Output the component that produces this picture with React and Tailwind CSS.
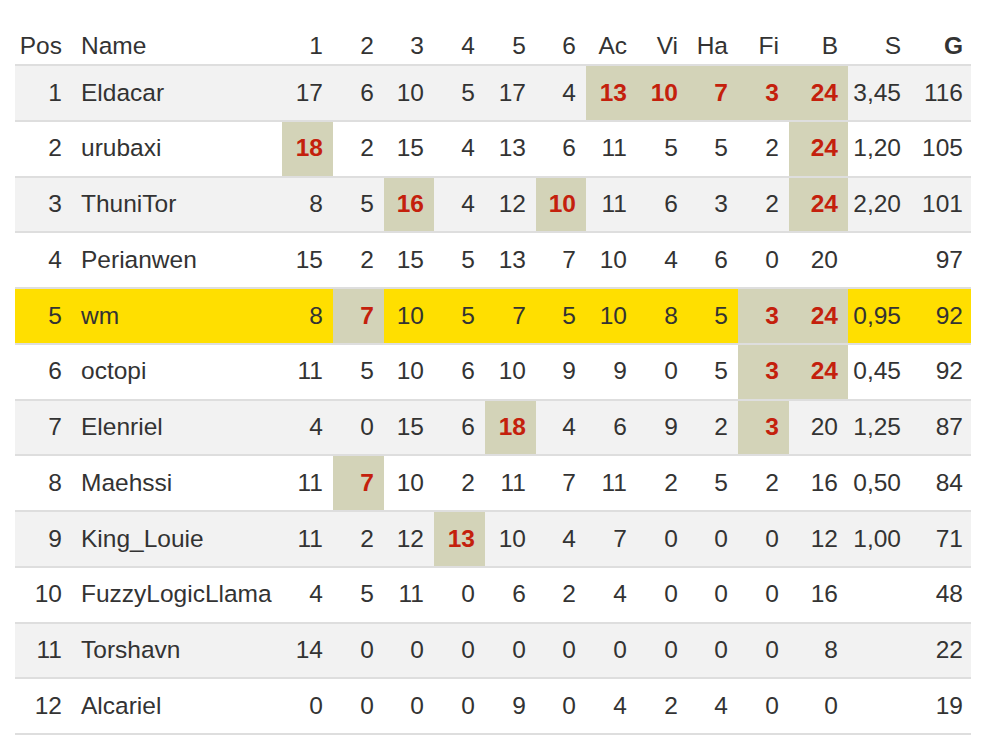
const columns = [
  { key: "pos", label: "Pos", width: "w-[56px]", align: "text-right pr-[9px]" },
  { key: "name", label: "Name", width: "w-[211px]", align: "text-left pl-[10px]" },
  { key: "c1", label: "1", width: "w-[51px]", align: "text-right pr-[10px]" },
  { key: "c2", label: "2", width: "w-[51px]", align: "text-right pr-[10px]" },
  { key: "c3", label: "3", width: "w-[50px]", align: "text-right pr-[10px]" },
  { key: "c4", label: "4", width: "w-[51px]", align: "text-right pr-[10px]" },
  { key: "c5", label: "5", width: "w-[51px]", align: "text-right pr-[10px]" },
  { key: "c6", label: "6", width: "w-[50px]", align: "text-right pr-[10px]" },
  { key: "ac", label: "Ac", width: "w-[51px]", align: "text-right pr-[10px]" },
  { key: "vi", label: "Vi", width: "w-[51px]", align: "text-right pr-[10px]" },
  { key: "ha", label: "Ha", width: "w-[50px]", align: "text-right pr-[10px]" },
  { key: "fi", label: "Fi", width: "w-[51px]", align: "text-right pr-[10px]" },
  { key: "b", label: "B", width: "w-[59px]", align: "text-right pr-[10px]" },
  { key: "s", label: "S", width: "w-[62px]", align: "text-right pr-[9px]" },
  { key: "g", label: "G", width: "w-[61px]", align: "text-right pr-[8px]" },
];

// "*" marks a best score for that column
const rows = [
  ["1", "Eldacar", "17", "6", "10", "5", "17", "4", "*13", "*10", "*7", "*3", "*24", "3,45", "116"],
  ["2", "urubaxi", "*18", "2", "15", "4", "13", "6", "11", "5", "5", "2", "*24", "1,20", "105"],
  ["3", "ThuniTor", "8", "5", "*16", "4", "12", "*10", "11", "6", "3", "2", "*24", "2,20", "101"],
  ["4", "Perianwen", "15", "2", "15", "5", "13", "7", "10", "4", "6", "0", "20", "", "97"],
  ["5", "wm", "8", "*7", "10", "5", "7", "5", "10", "8", "5", "*3", "*24", "0,95", "92"],
  ["6", "octopi", "11", "5", "10", "6", "10", "9", "9", "0", "5", "*3", "*24", "0,45", "92"],
  ["7", "Elenriel", "4", "0", "15", "6", "*18", "4", "6", "9", "2", "*3", "20", "1,25", "87"],
  ["8", "Maehssi", "11", "*7", "10", "2", "11", "7", "11", "2", "5", "2", "16", "0,50", "84"],
  ["9", "King_Louie", "11", "2", "12", "*13", "10", "4", "7", "0", "0", "0", "12", "1,00", "71"],
  ["10", "FuzzyLogicLlama", "4", "5", "11", "0", "6", "2", "4", "0", "0", "0", "16", "", "48"],
  ["11", "Torshavn", "14", "0", "0", "0", "0", "0", "0", "0", "0", "0", "8", "", "22"],
  ["12", "Alcariel", "0", "0", "0", "0", "9", "0", "4", "2", "4", "0", "0", "", "19"],
];

const ownPlayer = "wm";

export default function App() {
  return (
    <div className="min-h-screen bg-white pl-[15px] pt-[28px] font-['Liberation_Sans',Arial,sans-serif] text-[24.5px] text-[#333]">
      <table className="table-fixed border-separate border-spacing-0 w-[956px]">
        <colgroup>
          {columns.map((col) => (
            <col key={col.key} className={col.width} />
          ))}
        </colgroup>
        <thead>
          <tr>
            {columns.map((col) => (
              <th
                key={col.key}
                className={`h-[38px] border-b-2 border-[#dedede] p-0 leading-none ${col.align} ${
                  col.key === "g" ? "font-bold" : "font-normal"
                }`}
              >
                {col.label}
              </th>
            ))}
          </tr>
        </thead>
        <tbody>
          {rows.map((row, i) => {
            const rowBg =
              row[1] === ownPlayer ? "bg-[#ffdf00]" : i % 2 === 0 ? "bg-[#f2f2f2]" : "bg-white";
            return (
              <tr key={row[0]} className={rowBg}>
                {row.map((cell, j) => {
                  const best = cell.startsWith("*");
                  return (
                    <td
                      key={columns[j].key}
                      className={`h-[55.75px] border-b-2 border-[#dedede] p-0 leading-none whitespace-nowrap ${
                        columns[j].align
                      } ${best ? "bg-[#d3d3b8] font-bold text-[#c4200c]" : ""}`}
                    >
                      {best ? cell.slice(1) : cell}
                    </td>
                  );
                })}
              </tr>
            );
          })}
        </tbody>
      </table>
    </div>
  );
}
